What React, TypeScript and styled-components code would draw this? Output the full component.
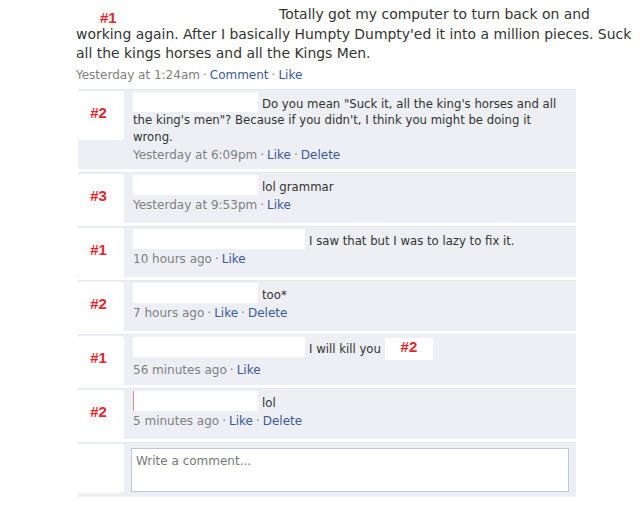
import React from 'react';
import styled, { createGlobalStyle } from 'styled-components';

const Global = createGlobalStyle`
  html, body { margin: 0; padding: 0; background: #ffffff; }
  body { font-family: "DejaVu Sans", Verdana, sans-serif; color: #333333; }
`;

const Page = styled.div`
  width: 640px;
  height: 506px;
  overflow: hidden;
  box-sizing: border-box;
  padding: 4px 0 0 76px;
`;

const PostText = styled.div`
  font-size: 13.93px;
  line-height: 19.5px;
  color: #333333;
  white-space: nowrap;
`;

const PostName = styled.span`
  display: inline-block;
  width: 203px;
  padding-left: 24px;
  box-sizing: border-box;
`;

const HeaderLabel = styled.span`
  position: relative;
  top: 4px;
  color: #e0282e;
  font-family: "Liberation Sans", Arial, sans-serif;
  font-size: 15px;
  font-weight: bold;
`;

const PostMeta = styled.div`
  margin-top: 2px;
  font-size: 12px;
  line-height: 18px;
  color: #808080;
`;

const Link = styled.span`
  color: #3b5998;
`;

const Dot = styled.span`
  color: #808080;
  padding: 0 3px;
`;

const List = styled.div`
  width: 498px;
  margin: 5px 0 0 2px;
  display: flex;
  flex-direction: column;
  gap: 3px;
`;

const Item = styled.div`
  display: flex;
  align-items: flex-start;
  background: #edeff4;
  border-top: 1px solid #e4e8ef;
`;

const Avatar = styled.div`
  flex: none;
  width: 46px;
  height: 49px;
  margin: 1px 0 0 0;
  background: #ffffff;
  border-radius: 3px;
  box-sizing: border-box;
  padding: 12px 5px 0 0;
  text-align: center;
`;

const Label = styled.span`
  color: #e0282e;
  font-family: "Liberation Sans", Arial, sans-serif;
  font-size: 15px;
  font-weight: bold;
  line-height: 18px;
`;

const Body = styled.div`
  flex: 1;
  margin-left: 9px;
  padding: 6px 20px 5px 0;
  font-size: 12px;
  line-height: 16.5px;
  color: #333333;
`;

const Line = styled.div`
  white-space: nowrap;
  font-size: 11.7px;
`;

const NameBlank = styled.span<{ $w: number; $mark?: boolean }>`
  display: inline-block;
  vertical-align: top;
  width: ${p => p.$w}px;
  height: 20px;
  margin: -4px 4px 0 0;
  background: #ffffff;
  border-left: ${p => (p.$mark ? '1px solid #e98a8a' : 'none')};
  box-sizing: border-box;
`;

const TagBlank = styled.span`
  display: inline-block;
  vertical-align: top;
  width: 48px;
  height: 22px;
  margin: -3px 0 0 4px;
  background: #ffffff;
  text-align: center;
`;

const Meta = styled.div`
  margin-top: 2px;
  color: #808080;
  white-space: nowrap;
`;

const ComposeBody = styled.div`
  flex: 1;
  margin-left: 7px;
  padding: 5px 7px 5px 0;
`;

const Compose = styled.div`
  height: 44px;
  box-sizing: border-box;
  border: 1px solid #bdc7d8;
  background: #ffffff;
  padding: 5px 4px;
  font-size: 12px;
  color: #777777;
`;

type C = {
  label: string;
  blank: number;
  mark?: boolean;
  lines: React.ReactNode[];
  time: string;
  del?: boolean;
};

const comments: C[] = [
  {
    label: '#2',
    blank: 125,
    lines: [
      'Do you mean "Suck it, all the king\'s horses and all',
      'the king\'s men"? Because if you didn\'t, I think you might be doing it',
      'wrong.',
    ],
    time: 'Yesterday at 6:09pm',
    del: true,
  },
  { label: '#3', blank: 125, lines: ['lol grammar'], time: 'Yesterday at 9:53pm' },
  { label: '#1', blank: 172, lines: ['I saw that but I was to lazy to fix it.'], time: '10 hours ago' },
  { label: '#2', blank: 125, lines: ['too*'], time: '7 hours ago', del: true },
  {
    label: '#1',
    blank: 172,
    lines: [
      <>
        I will kill you
        <TagBlank>
          <Label>#2</Label>
        </TagBlank>
      </>,
    ],
    time: '56 minutes ago',
  },
  { label: '#2', blank: 125, mark: true, lines: ['lol'], time: '5 minutes ago', del: true },
];

export default function App() {
  return (
    <Page>
      <Global />
      <PostText>
        <PostName>
          <HeaderLabel>#1</HeaderLabel>
        </PostName>
        Totally got my computer to turn back on and
        <br />
        working again. After I basically Humpty Dumpty'ed it into a million pieces. Suck
        <br />
        all the kings horses and all the Kings Men.
      </PostText>
      <PostMeta>
        Yesterday at 1:24am<Dot>·</Dot>
        <Link>Comment</Link>
        <Dot>·</Dot>
        <Link>Like</Link>
      </PostMeta>
      <List>
        {comments.map((c, i) => (
          <Item key={i}>
            <Avatar>
              <Label>{c.label}</Label>
            </Avatar>
            <Body>
              {c.lines.map((l, j) => (
                <Line key={j}>
                  {j === 0 && <NameBlank $w={c.blank} $mark={c.mark} />}
                  {l}
                </Line>
              ))}
              <Meta>
                {c.time}
                <Dot>·</Dot>
                <Link>Like</Link>
                {c.del && (
                  <>
                    <Dot>·</Dot>
                    <Link>Delete</Link>
                  </>
                )}
              </Meta>
            </Body>
          </Item>
        ))}
        <Item>
          <Avatar />
          <ComposeBody>
            <Compose>Write a comment...</Compose>
          </ComposeBody>
        </Item>
      </List>
    </Page>
  );
}
